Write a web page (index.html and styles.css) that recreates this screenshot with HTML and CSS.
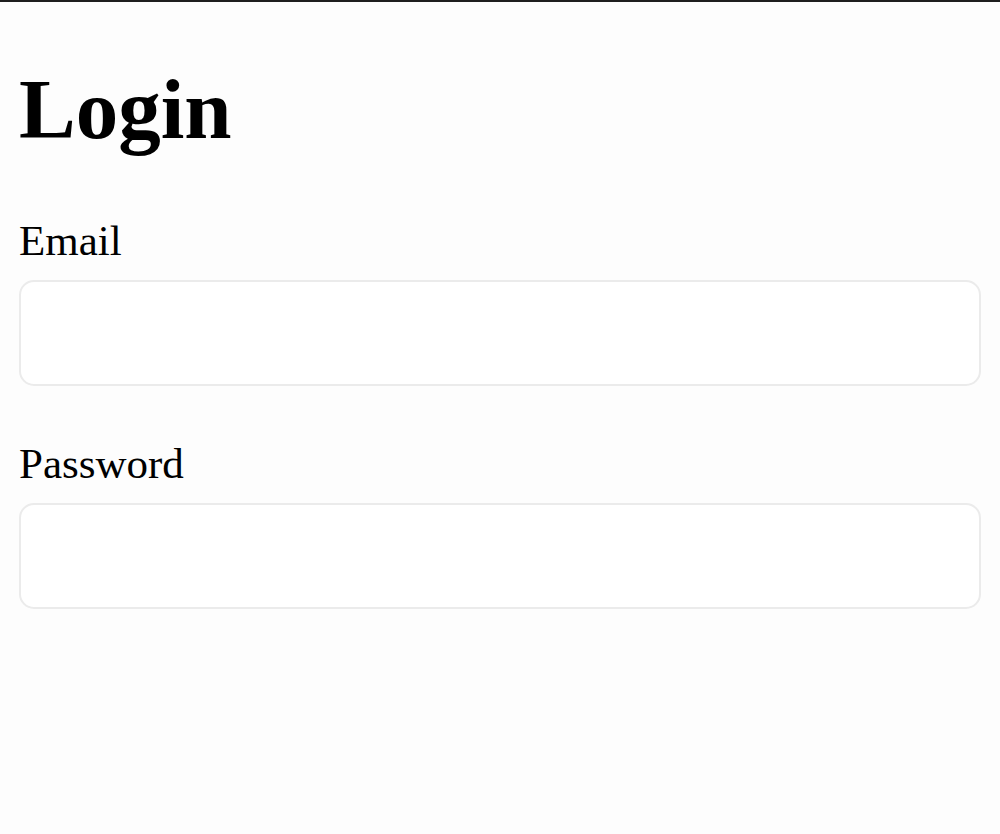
FILE: index.html
```html
<!DOCTYPE html>
<html lang="en">
<head>
<meta charset="utf-8">
<title>Login</title>
<link rel="stylesheet" href="styles.css">
</head>
<body>
<main class="page">
  <h1 class="title">Login</h1>
  <form class="form">
    <div class="field">
      <label class="label" for="email">Email</label>
      <input class="input" id="email" type="email">
    </div>
    <div class="field">
      <label class="label" for="password">Password</label>
      <input class="input" id="password" type="password">
    </div>
  </form>
</main>
</body>
</html>
```
FILE: styles.css
```css
html, body {
  margin: 0;
  padding: 0;
  background: #fdfdfd;
}
body {
  border-top: 2px solid #1e1e1e;
  font-family: "Liberation Serif", "Times New Roman", serif;
  color: #000;
}
.page {
  padding: 0 19px 0 19px;
}
.title {
  margin: 57px 0 57px;
  font-size: 85px;
  line-height: 100px;
  font-weight: bold;
}
.form {
  display: flex;
  flex-direction: column;
  gap: 53px;
  margin: 0;
}
.field {
  display: flex;
  flex-direction: column;
  gap: 14px;
}
.label {
  font-size: 43px;
  line-height: 50px;
}
.input {
  box-sizing: border-box;
  width: 100%;
  height: 106px;
  margin: 0;
  border: 2px solid #ebebeb;
  border-radius: 15px;
  background: #fff;
  outline: none;
  font: inherit;
}
```
